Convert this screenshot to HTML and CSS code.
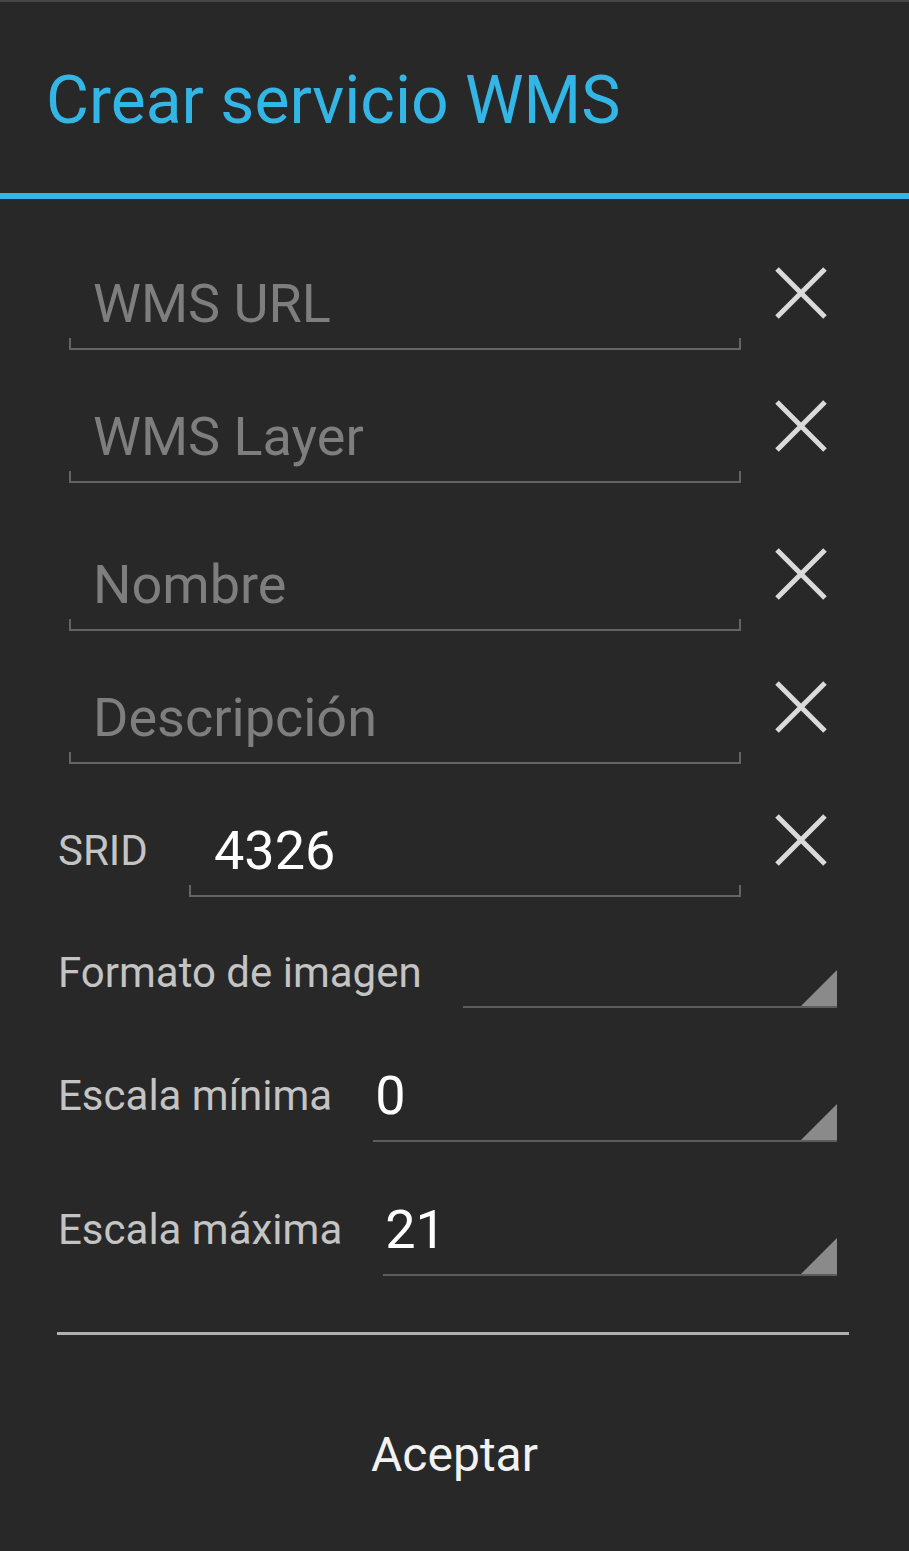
FILE: index.html
```html
<!DOCTYPE html>
<html lang="es">
<head>
    <meta charset="UTF-8">
    <meta name="viewport" content="width=device-width, initial-scale=1.0">
    <title>Crear servicio WMS</title>
    <link rel="stylesheet" href="styles.css">
</head>
<body>
    <div class="dialog">
        <div class="dialog-header">
            <h1 class="dialog-title">Crear servicio WMS</h1>
        </div>

        <div class="form">
            <!-- Text fields with clear buttons -->
            <div class="row">
                <div class="field"><span class="hint">WMS URL</span></div>
                <button class="clear" title="Borrar">
                    <svg viewBox="0 0 54 54" width="54" height="54"><path d="M3 3 L51 51 M51 3 L3 51"/></svg>
                </button>
            </div>
            <div class="row">
                <div class="field"><span class="hint">WMS Layer</span></div>
                <button class="clear" title="Borrar">
                    <svg viewBox="0 0 54 54" width="54" height="54"><path d="M3 3 L51 51 M51 3 L3 51"/></svg>
                </button>
            </div>
            <div class="row row-wide">
                <div class="field"><span class="hint">Nombre</span></div>
                <button class="clear" title="Borrar">
                    <svg viewBox="0 0 54 54" width="54" height="54"><path d="M3 3 L51 51 M51 3 L3 51"/></svg>
                </button>
            </div>
            <div class="row">
                <div class="field"><span class="hint">Descripción</span></div>
                <button class="clear" title="Borrar">
                    <svg viewBox="0 0 54 54" width="54" height="54"><path d="M3 3 L51 51 M51 3 L3 51"/></svg>
                </button>
            </div>
            <div class="row row-labeled">
                <span class="label label-srid">SRID</span>
                <div class="field field-short"><span class="value">4326</span></div>
                <button class="clear" title="Borrar">
                    <svg viewBox="0 0 54 54" width="54" height="54"><path d="M3 3 L51 51 M51 3 L3 51"/></svg>
                </button>
            </div>

            <!-- Spinners -->
            <div class="spin-row">
                <span class="label label-high">Formato de imagen</span>
                <div class="spinner spinner-empty"></div>
            </div>
            <div class="spin-row">
                <span class="label">Escala mínima</span>
                <div class="spinner"><span class="spin-value">0</span></div>
            </div>
            <div class="spin-row">
                <span class="label">Escala máxima</span>
                <div class="spinner"><span class="spin-value">21</span></div>
            </div>
        </div>

        <div class="divider"></div>
        <button class="accept">Aceptar</button>
    </div>
</body>
</html>
```

FILE: styles.css
```css
body {
    margin: 0;
    background: #282828;
    font-family: Roboto, "Noto Sans", sans-serif;
}

.dialog {
    width: 909px;
    min-height: 1551px;
    background: #282828;
}

/* Header with blue underline */
.dialog-header {
    border-top: 2px solid #454545;
    border-bottom: 6px solid #33b5e5;
    padding: 60px 0 54px 46px;
}

.dialog-title {
    margin: 0;
    color: #33b5e5;
    font-size: 66px;
    font-weight: 400;
    line-height: 77px;
}

.form {
    padding-top: 67px;
}

/* Edit text rows */
.row {
    display: flex;
    align-items: flex-end;
    padding-left: 69px;
    margin-bottom: 49px;
}

.row-wide {
    margin-top: 64px;
}

.row-labeled {
    padding-left: 58px;
    margin-bottom: 51px;
}

.field {
    position: relative;
    width: 648px;
    padding: 0 0 12px 24px;
    border-bottom: 2px solid #646464;
}

.field::before,
.field::after {
    content: "";
    position: absolute;
    bottom: 0;
    width: 2px;
    height: 10px;
    background: #646464;
}

.field::before { left: 0; }
.field::after { right: 0; }

.field-short {
    width: 527px;
    padding-left: 25px;
}

.hint,
.value {
    display: block;
    font-size: 54px;
    line-height: 64px;
    color: #7e7e7e;
}

.value {
    color: #ffffff;
}

.clear {
    width: 54px;
    height: 54px;
    margin: 0 0 30px 33px;
    padding: 0;
    border: 0;
    background: none;
}

.clear svg {
    display: block;
}

.clear path {
    stroke: #dadada;
    stroke-width: 5;
    fill: none;
}

.label {
    font-size: 42px;
    line-height: 50px;
    color: #c4c4c4;
    margin-bottom: 21px;
    white-space: nowrap;
}

.label-srid {
    width: 131px;
}

.label-high {
    margin-bottom: 10px;
}

/* Spinner rows */
.spin-row {
    display: flex;
    align-items: flex-end;
    padding: 0 72px 0 58px;
    margin-bottom: 56px;
}

.spin-row .label {
    margin-right: 41px;
}

.spinner {
    position: relative;
    flex: 1;
    padding: 0 0 12px 2px;
    border-bottom: 2px solid #5c5c5c;
}

.spinner::after {
    content: "";
    position: absolute;
    right: 0;
    bottom: 0;
    width: 36px;
    height: 36px;
    background: #8a8a8a;
    clip-path: polygon(100% 0, 100% 100%, 0 100%);
}

.spinner-empty {
    height: 36px;
    padding: 0;
}

.spin-value {
    display: block;
    font-size: 54px;
    line-height: 64px;
    color: #ffffff;
}

/* Footer */
.divider {
    height: 3px;
    margin: 0 60px 0 57px;
    background: #b0b0b0;
}

.accept {
    display: block;
    width: 100%;
    padding: 92px 0 40px;
    border: 0;
    background: none;
    color: #f2f2f2;
    font-family: Roboto, "Noto Sans", sans-serif;
    font-size: 48px;
    line-height: 56px;
}
```
